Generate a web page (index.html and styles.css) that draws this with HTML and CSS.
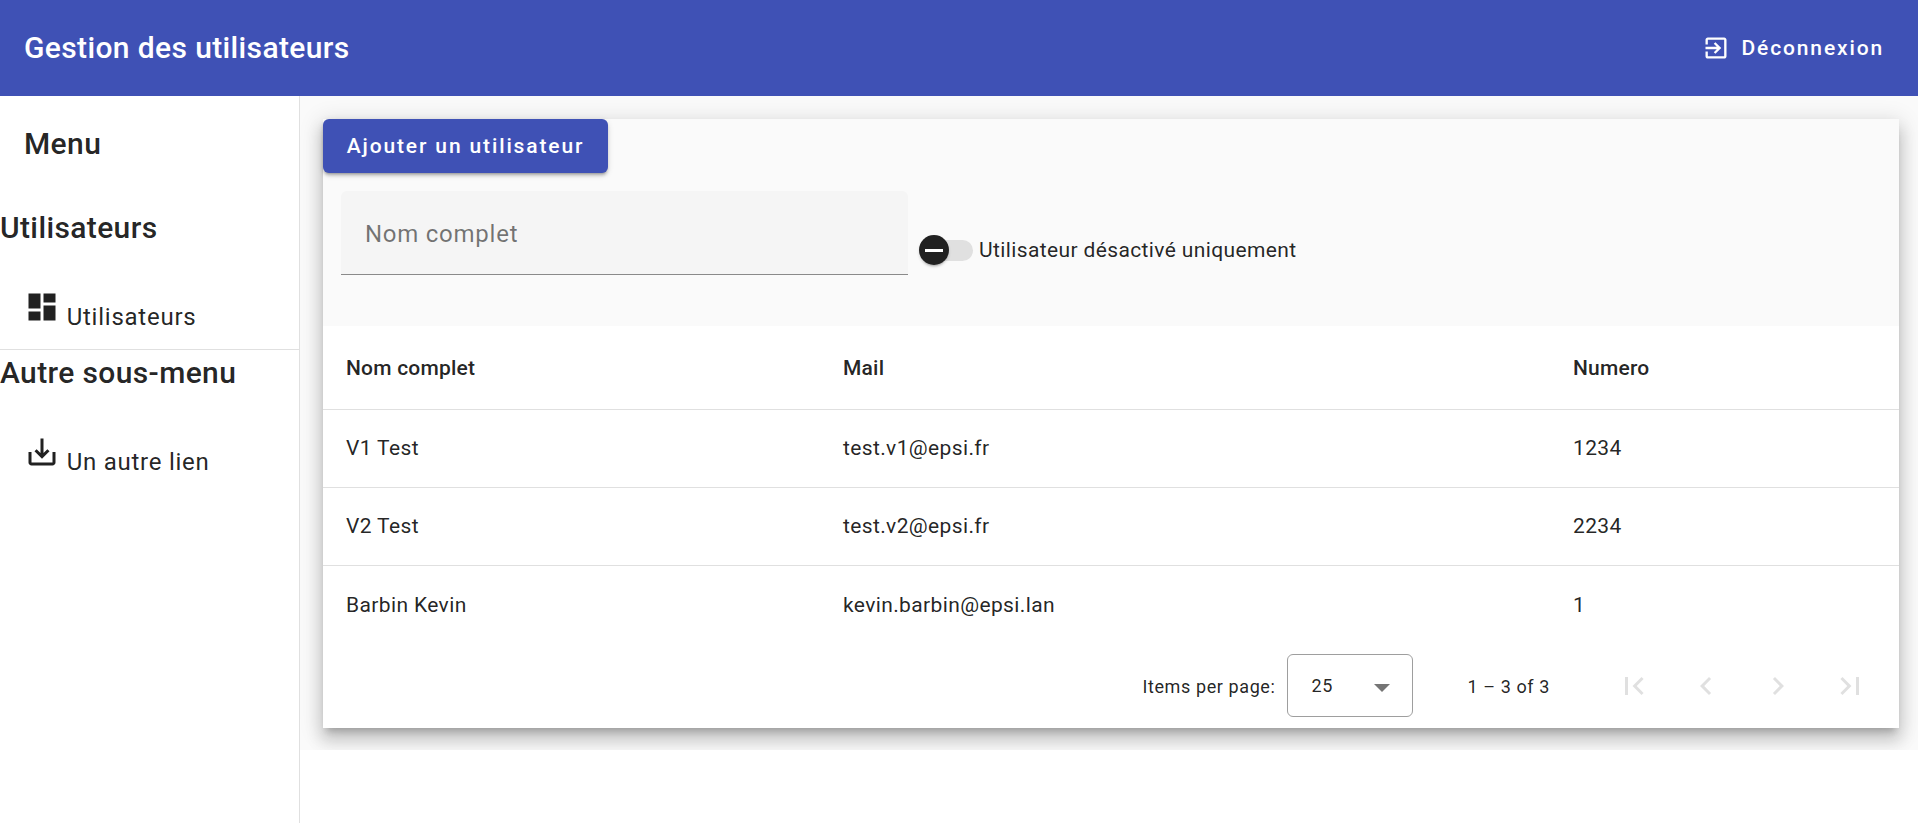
FILE: index.html
```html
<!DOCTYPE html>
<html lang="fr">

<head>
    <meta charset="UTF-8">
    <title>Gestion des utilisateurs</title>
    <link rel="stylesheet" href="styles.css">
</head>

<body>
    <header class="toolbar">
        <span class="toolbar-title">Gestion des utilisateurs</span>
        <a class="logout">
            <svg class="icon" viewBox="0 0 24 24"><path d="M10.09 15.59L11.5 17l5-5-5-5-1.41 1.41L12.67 11H3v2h9.67l-2.58 2.59zM19 3H5c-1.11 0-2 .9-2 2v4h2V5h14v14H5v-4H3v4c0 1.1.89 2 2 2h14c1.1 0 2-.9 2-2V5c0-1.1-.9-2-2-2z"/></svg>
            <span>Déconnexion</span>
        </a>
    </header>

    <div class="layout">
        <nav class="sidebar">
            <h2 class="menu-title">Menu</h2>
            <h3 class="group-title">Utilisateurs</h3>
            <a class="side-link"><svg class="side-icon" viewBox="0 0 24 24"><path d="M3 13h8V3H3v10zm0 8h8v-6H3v6zm10 0h8V11h-8v10zm0-18v6h8V3h-8z"/></svg> Utilisateurs</a>
            <hr class="side-divider">
            <h3 class="group-title group-second">Autre sous-menu</h3>
            <a class="side-link side-link-second"><svg class="side-icon" viewBox="0 0 24 24"><path d="M19 12v7H5v-7H3v7c0 1.1.9 2 2 2h14c1.1 0 2-.9 2-2v-7h-2zm-6 .67l2.59-2.58L17 11.5l-5 5-5-5 1.41-1.41L11 12.67V3h2z"/></svg> Un autre lien</a>
        </nav>

        <main class="content">
            <section class="card">
                <button class="add-button">Ajouter un utilisateur</button>

                <div class="filters">
                    <div class="search-field">Nom complet</div>
                    <div class="toggle">
                        <span class="toggle-track"></span>
                        <span class="toggle-thumb"><span class="toggle-minus"></span></span>
                        <span class="toggle-label">Utilisateur désactivé uniquement</span>
                    </div>
                </div>

                <table class="users">
                    <tr>
                        <th class="col-name">Nom complet</th>
                        <th class="col-mail">Mail</th>
                        <th>Numero</th>
                    </tr>
                    <tr>
                        <td>V1 Test</td>
                        <td>test.v1@epsi.fr</td>
                        <td>1234</td>
                    </tr>
                    <tr>
                        <td>V2 Test</td>
                        <td>test.v2@epsi.fr</td>
                        <td>2234</td>
                    </tr>
                    <tr class="last-row">
                        <td>Barbin Kevin</td>
                        <td>kevin.barbin@epsi.lan</td>
                        <td>1</td>
                    </tr>
                </table>

                <div class="paginator">
                    <span class="page-label">Items per page:</span>
                    <div class="page-select">
                        <span>25</span>
                        <span class="select-arrow"></span>
                    </div>
                    <span class="page-range">1 – 3 of 3</span>
                    <div class="page-buttons">
                        <span class="page-button"><svg viewBox="0 0 24 24"><path d="M18.41 16.59L13.82 12l4.59-4.59L17 6l-6 6 6 6zM6 6h2v12H6z"/></svg></span>
                        <span class="page-button"><svg viewBox="0 0 24 24"><path d="M15.41 7.41L14 6l-6 6 6 6 1.41-1.41L10.83 12z"/></svg></span>
                        <span class="page-button"><svg viewBox="0 0 24 24"><path d="M10 6L8.59 7.41 13.17 12l-4.58 4.59L10 18l6-6z"/></svg></span>
                        <span class="page-button"><svg viewBox="0 0 24 24"><path d="M5.59 7.41L10.18 12l-4.59 4.59L7 18l6-6-6-6zM16 6h2v12h-2z"/></svg></span>
                    </div>
                </div>
            </section>
        </main>
    </div>
</body>

</html>
```

FILE: styles.css
```css
html,
body {
    height: 100%;
}

body {
    font-family: Roboto, sans-serif;
    color: rgba(0, 0, 0, 0.87);
    background-color: white;
    margin: 0;
    overflow: hidden;
    display: flex;
    flex-direction: column;
}

.toolbar {
    height: 96px;
    flex: none;
    display: flex;
    align-items: center;
    justify-content: space-between;
    padding: 0 34px 0 24px;
    background-color: #3f51b5;
    color: white;
}

.toolbar-title {
    font-size: 30px;
    font-weight: 500;
    letter-spacing: 0.0125em;
    margin-bottom: 2px;
}

.logout {
    display: flex;
    align-items: center;
    font-size: 21px;
    font-weight: 500;
    letter-spacing: 0.089em;
}

.logout .icon {
    width: 28px;
    height: 28px;
    margin-right: 11px;
    fill: white;
}

.layout {
    flex: 1;
    display: flex;
    min-height: 0;
}

.sidebar {
    width: 299px;
    flex: none;
    border-right: 1px solid #e0e0e0;
}

.menu-title {
    font-size: 30px;
    font-weight: 500;
    line-height: 42px;
    letter-spacing: 0.0125em;
    margin: 27px 0 0 24px;
}

.group-title {
    font-size: 30px;
    font-weight: 500;
    line-height: 42px;
    letter-spacing: 0.0125em;
    margin: 42px 0 0 0;
}

.group-second {
    margin-top: 2px;
}

.side-link {
    display: block;
    font-size: 24px;
    letter-spacing: 0.03125em;
    line-height: 36px;
    margin: 40px 0 0 24px;
}

.side-icon {
    width: 36px;
    height: 36px;
    fill: #212121;
    vertical-align: baseline;
}

.side-divider {
    border: 0;
    border-top: 1px solid #e0e0e0;
    margin: 14px 0 0 0;
}

.content {
    flex: 1;
    height: 654px;
    background-color: #fafafa;
    overflow: hidden;
    padding: 23px 19px 0 23px;
    box-sizing: border-box;
}

.card {
    background-color: #fafafa;
    box-shadow: 0 7px 7px -4px rgba(0, 0, 0, 0.2), 0 12px 15px 2px rgba(0, 0, 0, 0.14), 0 4px 21px 3px rgba(0, 0, 0, 0.12);
}

.add-button {
    display: block;
    width: 285px;
    height: 54px;
    border: 0;
    border-radius: 6px;
    background-color: #3f51b5;
    color: white;
    font-family: inherit;
    font-size: 21px;
    font-weight: 500;
    letter-spacing: 0.089em;
    box-shadow: 0 3px 2px -2px rgba(0, 0, 0, 0.2), 0 3px 3px 0 rgba(0, 0, 0, 0.14), 0 2px 6px 0 rgba(0, 0, 0, 0.12);
}

.filters {
    height: 153px;
    display: flex;
    align-items: flex-start;
    padding: 18px 0 0 18px;
    box-sizing: border-box;
}

.search-field {
    width: 567px;
    height: 84px;
    box-sizing: border-box;
    padding: 0 24px;
    line-height: 86px;
    background-color: #f5f5f5;
    border-bottom: 1px solid #8a8a8a;
    border-radius: 6px 6px 0 0;
    font-size: 24px;
    letter-spacing: 0.03125em;
    color: rgba(0, 0, 0, 0.54);
}

.toggle {
    position: relative;
    display: flex;
    align-items: center;
    margin: 44px 0 0 11px;
    height: 30px;
}

.toggle-track {
    width: 54px;
    height: 21px;
    border-radius: 11px;
    background-color: #e0e0e0;
}

.toggle-thumb {
    position: absolute;
    left: 0;
    top: 0;
    width: 30px;
    height: 30px;
    border-radius: 50%;
    background-color: #212121;
    display: flex;
    align-items: center;
    justify-content: center;
    box-shadow: 0 3px 2px -2px rgba(0, 0, 0, 0.2), 0 2px 3px 0 rgba(0, 0, 0, 0.14);
}

.toggle-minus {
    width: 18px;
    height: 3px;
    background-color: white;
}

.toggle-label {
    margin-left: 6px;
    font-size: 21px;
    letter-spacing: 0.0178em;
}

.users {
    width: 100%;
    border-collapse: separate;
    border-spacing: 0;
    background-color: white;
    table-layout: fixed;
}

.users th,
.users td {
    padding: 0 0 0 24px;
    text-align: left;
    border-bottom: 1px solid #e0e0e0;
    box-sizing: border-box;
}

.users th {
    height: 84px;
    font-size: 21px;
    font-weight: 500;
    letter-spacing: 0.01em;
}

.users td {
    height: 78px;
    padding-bottom: 1px;
    font-size: 21px;
    letter-spacing: 0.0178em;
}

.users th:first-child,
.users td:first-child {
    padding-left: 23px;
}

.users .last-row td {
    border-bottom: 0;
    padding-bottom: 0;
}

.col-name {
    width: 496px;
}

.col-mail {
    width: 730px;
}

.paginator {
    height: 84px;
    background-color: white;
    display: flex;
    align-items: center;
    justify-content: flex-end;
    font-size: 18px;
    letter-spacing: 0.0333em;
    padding-right: 19px;
}

.page-select {
    width: 126px;
    height: 63px;
    box-sizing: border-box;
    margin: 0 0 1px 12px;
    border: 1px solid #9e9e9e;
    border-radius: 6px;
    display: flex;
    align-items: center;
    justify-content: space-between;
    padding: 0 23px;
}

.select-arrow {
    border-left: 8px solid transparent;
    border-right: 8px solid transparent;
    border-top: 8px solid rgba(0, 0, 0, 0.54);
    margin: 5px -1px 0 0;
}

.page-range {
    margin: 0 54px 0 54px;
}

.page-buttons {
    display: flex;
    gap: 12px;
}

.page-button {
    width: 60px;
    height: 60px;
    display: flex;
    align-items: center;
    justify-content: center;
}

.page-button svg {
    width: 36px;
    height: 36px;
    fill: rgba(0, 0, 0, 0.12);
}
```
